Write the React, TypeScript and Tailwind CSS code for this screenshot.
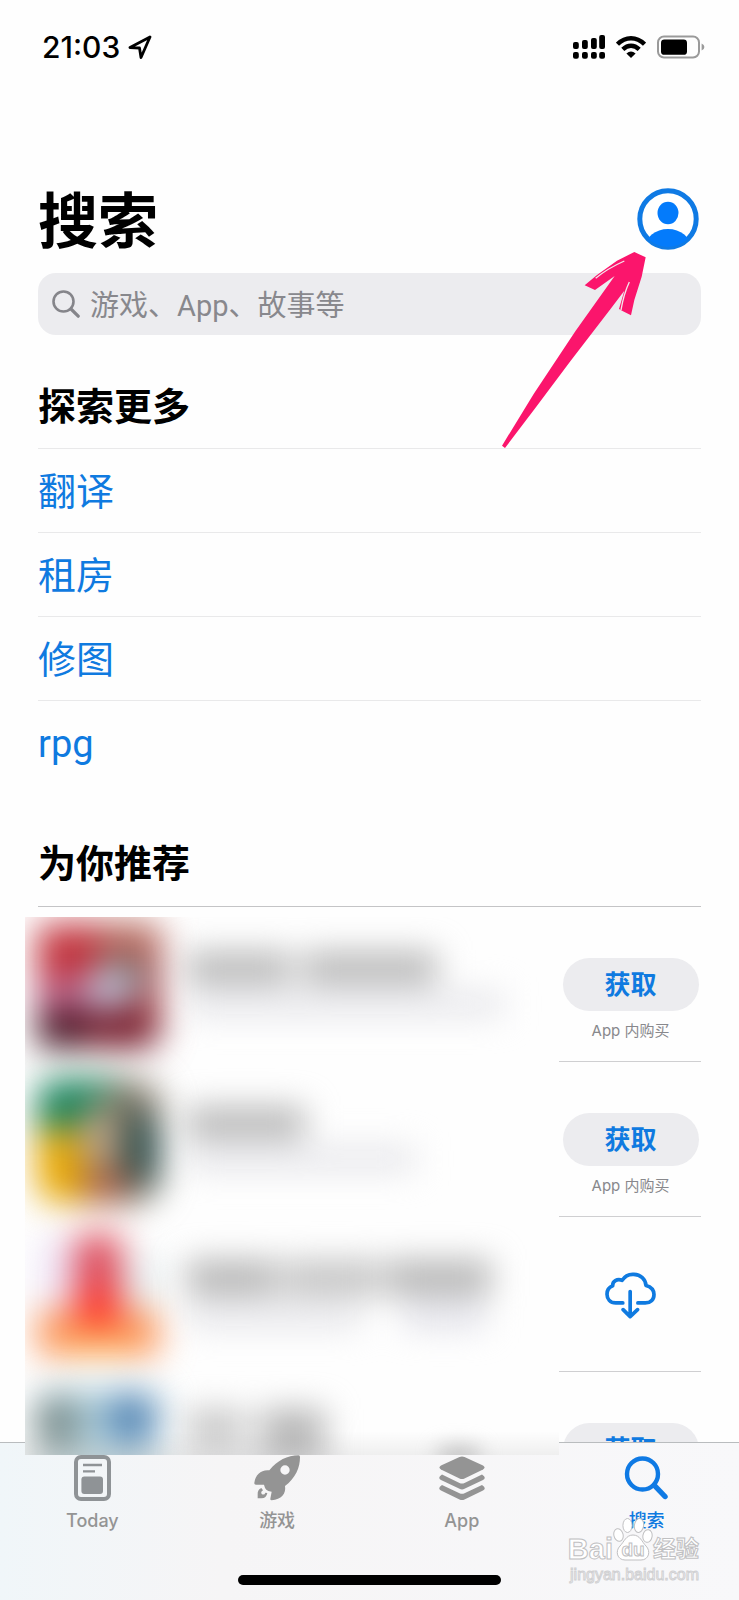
import type { ReactNode } from 'react';

const topics = ['翻译', '租房', '修图', 'rpg'];

const recommendations: { thumb: ReactNode; action: 'get' | 'cloud' }[] = [
  { thumb: <ThumbRed />, action: 'get' },
  { thumb: <ThumbGreen />, action: 'get' },
  { thumb: <ThumbOrange />, action: 'cloud' },
  { thumb: <ThumbBlue />, action: 'get' },
];

export default function App() {
  return (
    <div className="relative flex h-screen flex-col overflow-hidden bg-[#fefefe] font-['Inter','Noto_Sans_CJK_SC',sans-serif] text-black">
      <StatusBar />

      <main className="min-h-0 flex-1 px-[38px] pt-[94px]">
        {/* Title */}
        <div className="flex h-[62px] items-center justify-between">
          <h1 className="pt-1 text-[60px] leading-[62px] font-bold">搜索</h1>
          <button type="button" aria-label="账户" className="mr-[2px]">
            <AccountIcon />
          </button>
        </div>

        {/* Search field */}
        <label className="mt-[23px] flex h-[62px] items-center gap-[10px] rounded-[18px] bg-[#ececef] px-[14px]">
          <svg viewBox="0 0 28 28" className="size-7 shrink-0" fill="none" stroke="#85858a" strokeLinecap="round">
            <circle cx="11.5" cy="11.5" r="10" strokeWidth="2.6" />
            <path d="M19 19l7.2 7.2" strokeWidth="3.2" />
          </svg>
          <input
            type="text"
            aria-label="搜索"
            placeholder="游戏、App、故事等"
            className="min-w-0 flex-1 bg-transparent pt-1 font-['Roboto','Noto_Sans_CJK_SC',sans-serif] text-[29px] leading-10 outline-none placeholder:text-[#88888d]"
          />
        </label>

        {/* Discover */}
        <section className="pt-[47px]">
          <h2 className="mb-[18px] text-[38px] leading-[48px] font-semibold">探索更多</h2>
          <ul>
            {topics.map((topic) => (
              <li key={topic} className="flex h-[84px] items-center border-t border-[#e9e9ea] pt-[3px]">
                <a
                  href="#"
                  className="font-['Roboto','Noto_Sans_CJK_SC',sans-serif] text-[38px] leading-[48px] text-[#0f7ae0]"
                >
                  {topic}
                </a>
              </li>
            ))}
          </ul>
        </section>

        {/* Recommended */}
        <section className="pt-[55px]">
          <h2 className="text-[38px] leading-[48px] font-semibold">为你推荐</h2>
          <div className="mt-[19px] flex border-t border-[#c4c4c6]">
            <div className="relative z-20 -ml-[13px] mt-[10px] h-[538px] flex-1 overflow-hidden">
              <BlurredList />
            </div>
            <ul className="w-[142px] shrink-0">
              {recommendations.map((item, i) => (
                <li key={i} className="flex h-[155px] flex-col items-center border-b border-[#cfcfd1] pl-px">
                  {item.action === 'get' ? (
                    <>
                      <button
                        type="button"
                        className="mt-[51px] h-[53px] w-[136px] rounded-full bg-[#ececef] text-[26px] leading-8 font-bold text-[#0f7ae0]"
                      >
                        获取
                      </button>
                      <span className="mt-[10px] text-[15px] leading-5 text-[#88888c]">App 内购买</span>
                    </>
                  ) : (
                    <button type="button" aria-label="下载" className="mt-[55px]">
                      <CloudIcon />
                    </button>
                  )}
                </li>
              ))}
            </ul>
          </div>
        </section>
      </main>

      <TabBar />

      {/* Pointer to the account button */}
      <svg viewBox="65 240 435 600" className="pointer-events-none absolute top-[250px] right-[92px] h-[200px] w-[145px]">
        <path
          fill="#fb156c"
          d="M65 827L160 672L285 484L403 318L344 360L313 346L350 315L410 272L462 246L496 262L484 320L462 390L452 436L428 424L416 417L432 362L390 418L270 574L165 714L74 834Z"
        />
        <path d="M346 325Q380 296 432 273M422 420Q430 372 447 336" fill="none" stroke="#f3e6eb" strokeWidth="4" />
      </svg>
    </div>
  );
}

function StatusBar() {
  return (
    <header className="flex h-[94px] shrink-0 items-center justify-between pr-[34px] pl-[42px]">
      <div className="flex items-center gap-[8px]">
        <span className="text-[30px] leading-9 font-medium">21:03</span>
        <svg viewBox="0 0 24 24" className="size-6" fill="none" stroke="#000" strokeWidth="2.8" strokeLinejoin="round">
          <path d="M22 2L2 12.5L11.5 13L13 22.5Z" />
        </svg>
      </div>
      <div className="flex items-center gap-[11px]">
        <svg viewBox="0 0 32 24" className="h-6 w-8">
          <rect x="0" y="7" width="5.8" height="7" rx="2" />
          <rect x="9" y="5" width="5.8" height="9" rx="2" />
          <rect x="18" y="3" width="5.8" height="11" rx="2" />
          <rect x="26.2" y="0" width="5.8" height="14" rx="2" />
          <rect x="0" y="17" width="5.8" height="6.8" rx="2" />
          <rect x="9" y="17" width="5.8" height="6.8" rx="2" />
          <rect x="18" y="17" width="5.8" height="6.8" rx="2" />
          <rect x="26.2" y="17" width="5.8" height="6.8" rx="2" />
        </svg>
        <svg viewBox="0 0 30 22" className="h-[22px] w-[30px]" fill="none" stroke="#000" strokeWidth="4.4">
          <path d="M1.5 8.2Q7.5 2.2 15 2.2T28.5 8.2" />
          <path d="M6.8 13.4Q10.5 9.8 15 9.8T23.2 13.4" />
          <path d="M15 22L10.4 17.4Q15 13.6 19.6 17.4Z" fill="#000" stroke="none" />
        </svg>
        <svg viewBox="0 0 48 24" className="h-6 w-12">
          <rect x="1" y="1.5" width="41" height="21" rx="6" fill="none" stroke="#9a9a9a" strokeWidth="2" />
          <rect x="4" y="4.4" width="26" height="15.4" rx="3.4" />
          <path d="M44.6 8.4Q47.4 9.6 47.4 12T44.6 15.6Z" fill="#9a9a9a" />
        </svg>
      </div>
    </header>
  );
}

function AccountIcon() {
  return (
    <svg viewBox="0 0 62 62" className="size-[62px]">
      <defs>
        <clipPath id="avatar">
          <circle cx="31" cy="31" r="28" />
        </clipPath>
      </defs>
      <circle cx="31" cy="31" r="28.2" fill="#fff" stroke="#0f7ae4" strokeWidth="5" />
      <ellipse cx="31" cy="25" rx="10.5" ry="11.3" fill="#047bfb" />
      <ellipse cx="31" cy="60" rx="23" ry="19" fill="#047bfb" clipPath="url(#avatar)" />
    </svg>
  );
}

function CloudIcon() {
  return (
    <svg
      viewBox="48 66 152 140"
      className="h-[47px] w-[51px]"
      fill="none"
      stroke="#0f7ae0"
      strokeWidth="11"
      strokeLinecap="round"
      strokeLinejoin="round"
    >
      <path d="M101 158H80C63 158 54 146 54 132C54 119 61 111 71 107C70 94 84 85 99 91C107 78 120 72 134 73C154 74 169 87 170 106C185 110 194 119 194 133C194 148 184 158 168 158H146" />
      <path d="M123 124V198M102 178L123 199L145 178" />
    </svg>
  );
}

function BlurredList() {
  return (
    <div className="-mt-[10px] bg-[#fefefe]">
      {recommendations.map((item, i) => (
        <div key={i} className="flex h-[155px] items-center gap-[26px] pt-[2px] pl-[12px]">
          {item.thumb}
          <BlurredText row={i} />
        </div>
      ))}
      <div className="absolute inset-x-0 bottom-0 h-6 bg-linear-to-b from-transparent to-black/6" />
      <div className="absolute right-[78px] -bottom-3 h-5 w-11 rounded-full bg-[#c0c0c0] blur-[10px]" />
    </div>
  );
}

function BlurredText({ row }: { row: number }) {
  return (
    <div className="flex flex-1 flex-col gap-[8px] pb-[4px] blur-[16px]">
      {row === 0 && (
        <>
          <div className="flex gap-[12px]">
            <div className="h-8 w-[104px] bg-[#b6b6b6]" />
            <div className="h-8 w-[134px] bg-[#b6b6b6]" />
          </div>
          <div className="h-6 w-[316px] bg-[#e6e6ea]" />
        </>
      )}
      {row === 1 && (
        <>
          <div className="h-8 w-[118px] bg-[#b6b6b6]" />
          <div className="h-6 w-[228px] bg-[#e6e6ea]" />
        </>
      )}
      {row === 2 && (
        <>
          <div className="flex gap-[6px]">
            <div className="h-9 w-[90px] bg-[#b6b6b6]" />
            <div className="h-9 w-[98px] bg-[#c4c4c4]" />
            <div className="h-9 w-[104px] bg-[#b6b6b6]" />
          </div>
          <div className="flex gap-[42px]">
            <div className="h-6 w-[174px] bg-[#e6e6ea]" />
            <div className="h-6 w-[82px] bg-[#e0e0e8]" />
          </div>
        </>
      )}
      {row === 3 && (
        <>
          <div className="flex gap-[16px]">
            <div className="h-10 w-[58px] bg-[#c8c8c8]" />
            <div className="h-12 w-[64px] bg-[#b6b6b6]" />
          </div>
          <div className="h-6 w-[140px] bg-[#e6e6ea]" />
        </>
      )}
    </div>
  );
}

function Thumb({ id, children }: { id: string; children: ReactNode }) {
  return (
    <svg viewBox="0 0 124 124" className="size-[124px] shrink-0 overflow-visible">
      <defs>
        <filter id={id} x="-50%" y="-50%" width="200%" height="200%" colorInterpolationFilters="sRGB">
          <feGaussianBlur stdDeviation="17" />
        </filter>
      </defs>
      <g filter={`url(#${id})`}>{children}</g>
    </svg>
  );
}

function ThumbRed() {
  return (
    <Thumb id="blur-red">
      <rect x="0" y="0" width="124" height="122" rx="18" fill="#ac4448" />
      <rect x="0" y="0" width="62" height="56" rx="12" fill="#c2323c" />
      <rect x="62" y="0" width="62" height="34" rx="12" fill="#b46054" />
      <rect x="0" y="54" width="58" height="32" fill="#b86088" />
      <rect x="58" y="34" width="50" height="40" rx="10" fill="#77807e" />
      <ellipse cx="72" cy="66" rx="26" ry="20" fill="#c0c0d8" />
      <rect x="0" y="88" width="50" height="36" rx="10" fill="#3c0c1c" />
      <rect x="46" y="88" width="74" height="36" rx="14" fill="#701424" />
    </Thumb>
  );
}

function ThumbGreen() {
  return (
    <Thumb id="blur-green">
      <rect x="0" y="0" width="124" height="124" rx="30" fill="#857a6a" />
      <path d="M0 52V24Q0 0 24 0H82L44 50Z" fill="#128058" />
      <path d="M0 50H40L50 124H24Q0 124 0 98Z" fill="#e8a800" />
      <ellipse cx="62" cy="58" rx="22" ry="34" fill="#b8a084" />
      <path d="M46 92H90V124H46Z" fill="#a8583c" />
      <path d="M90 26Q124 38 124 68T98 120L84 70Z" fill="#2c4c4a" />
    </Thumb>
  );
}

function ThumbOrange() {
  return (
    <Thumb id="blur-orange">
      <rect x="2" y="2" width="40" height="84" rx="16" fill="#efe6f8" />
      <rect x="86" y="20" width="36" height="60" rx="14" fill="#e4ecee" />
      <rect x="38" y="0" width="46" height="88" rx="10" fill="#dc4858" />
      <rect x="0" y="76" width="122" height="46" rx="10" fill="#fb9458" />
      <rect x="38" y="56" width="46" height="36" fill="#ff3428" />
      <rect x="28" y="100" width="66" height="20" fill="#fbac50" />
    </Thumb>
  );
}

function ThumbBlue() {
  return (
    <Thumb id="blur-blue">
      <rect x="0" y="0" width="124" height="64" rx="14" fill="#b0d0dc" />
      <ellipse cx="20" cy="36" rx="24" ry="30" fill="#7a8e8e" />
      <ellipse cx="94" cy="30" rx="26" ry="26" fill="#5888b6" />
      <rect x="2" y="62" width="118" height="60" fill="#dce8ea" />
    </Thumb>
  );
}

function TabBar() {
  return (
    <nav className="relative z-10 shrink-0 border-t border-[#b9bcbe] bg-linear-to-r from-[#f0f6f9] via-[#f6f5f6] via-30% to-[#f8f8fa] pt-3 pb-[15px]">
      <div className="grid grid-cols-4">
        <Tab label="Today">
          <svg viewBox="0 0 37 46" className="h-[46px] w-[37px]">
            <rect x="2" y="2" width="33" height="42" rx="5" fill="none" stroke="#8f9396" strokeWidth="4" />
            <path d="M9 10H28M9 16.4H21" stroke="#8f9396" strokeWidth="2.4" />
            <rect x="7.4" y="21.4" width="21.6" height="17.6" rx="3" fill="#8f9396" />
          </svg>
        </Tab>
        <Tab label="游戏">
          <svg viewBox="672 74 138 138" className="size-[46px]" fill="#949494">
            <path
              fillRule="evenodd"
              d="M806 75Q810 75 810 80C810 112 797 143 765 167C769 190 754 207 725 210Q720 210 721 205L725 184Q713 182 709 178Q704 173 702 163L678 163Q672 163 673 157C676 133 694 117 718 120C742 90 772 76 806 75ZM765 105A14 14 0 1 0 765 133A14 14 0 1 0 765 105Z"
            />
            <path d="M694 173Q682 178 683 192V204H695Q709 204 712 188L706 187Q704 195 696 192Q690 185 699 180Z" />
          </svg>
        </Tab>
        <Tab label="App">
          <svg viewBox="0 0 46 46" className="size-[46px]" fill="#949494">
            <path d="M20.5 2Q23 1 25.5 2L44 10.5Q47 12.5 44 14.5L25.5 23.5Q23 24.6 20.5 23.5L2 14.5Q-1 12.5 2 10.5Z" />
            <path d="M3 19.5L20.5 28Q23 29 25.5 28L43 19.5Q48 22.5 44 25L25.5 33.8Q23 35 20.5 33.8L2 25Q-2 22.5 3 19.5Z" />
            <path d="M3 30L20.5 38.3Q23 39.3 25.5 38.3L43 30Q48 33 44 35.5L25.5 44.5Q23 45.6 20.5 44.5L2 35.5Q-2 33 3 30Z" />
          </svg>
        </Tab>
        <Tab label="搜索" active>
          <svg viewBox="0 0 46 46" className="size-[46px]" fill="none" stroke="#0f7ae4" strokeLinecap="round">
            <circle cx="18.5" cy="19" r="15.5" strokeWidth="4.4" />
            <path d="M30.5 30.5L41 41.5" strokeWidth="5.4" />
          </svg>
        </Tab>
      </div>
      <div className="mx-auto mt-[42px] h-[10px] w-[263px] rounded-full bg-black" />

      {/* Watermark */}
      <div className="absolute right-[40px] bottom-[15px] flex flex-col items-end font-['Liberation_Sans','Noto_Sans_CJK_SC',sans-serif] text-white">
        <div className="flex items-end">
          <span className="text-[29px] leading-8 font-bold [-webkit-text-stroke:1px_#c0c0c2]">Bai</span>
          <svg viewBox="0 0 40 44" className="mb-1 h-11 w-10" fill="#fff" stroke="#c0c0c2" strokeWidth="1">
            <ellipse cx="5.5" cy="18" rx="4.6" ry="6.4" transform="rotate(-14 5.5 18)" />
            <ellipse cx="14.5" cy="8.5" rx="4.6" ry="7" />
            <ellipse cx="26" cy="8.5" rx="4.6" ry="7" transform="rotate(8 26 8.5)" />
            <ellipse cx="34.5" cy="19" rx="4.6" ry="6.4" transform="rotate(10 34.5 19)" />
            <path d="M20 18C27 18 29 25 33 29C38 34 36 43 28 43H12C4 43 2 34 7 29C11 25 13 18 20 18Z" />
            <text x="20" y="39" textAnchor="middle" fontSize="19" fontWeight="bold">
              du
            </text>
          </svg>
          <span className="text-[23px] leading-8 font-bold [-webkit-text-stroke:1px_#c0c0c2]">经验</span>
        </div>
        <div className="text-[16px] leading-5 [-webkit-text-stroke:1px_#d0d0d2]">jingyan.baidu.com</div>
      </div>
    </nav>
  );
}

function Tab({ label, active = false, children }: { label: string; active?: boolean; children: ReactNode }) {
  return (
    <button
      type="button"
      className={`flex flex-col items-center gap-2 text-[18px] leading-6 font-medium ${active ? 'text-[#0f7ae0]' : 'text-[#949494]'}`}
    >
      {children}
      {label}
    </button>
  );
}
